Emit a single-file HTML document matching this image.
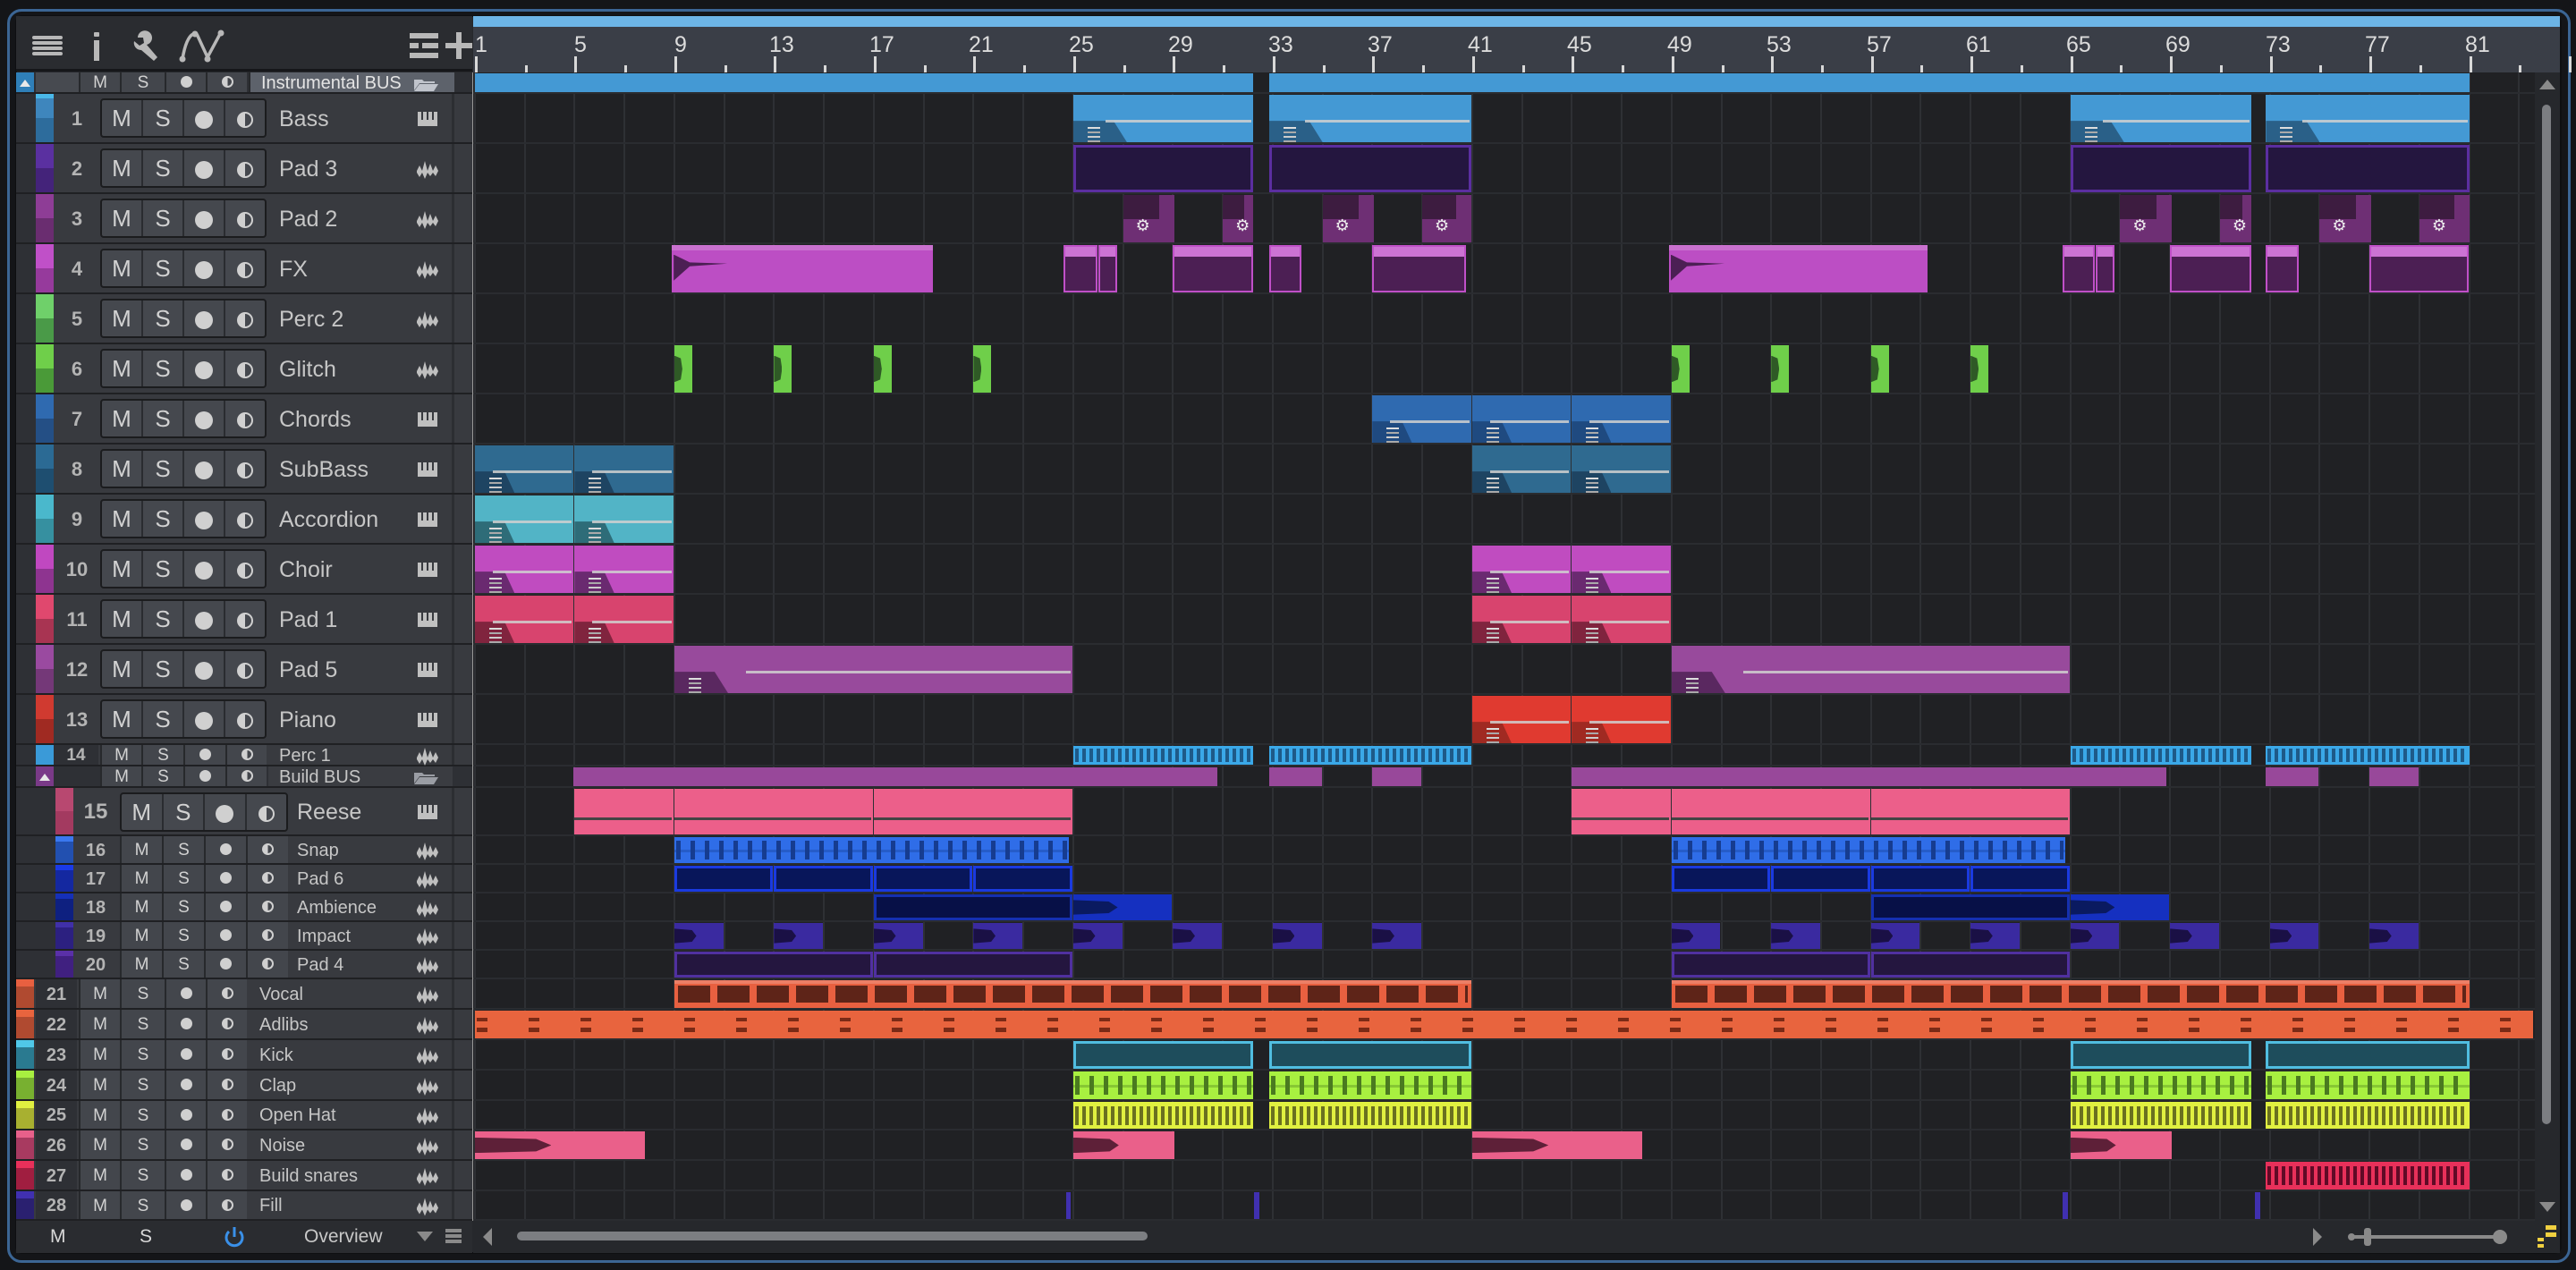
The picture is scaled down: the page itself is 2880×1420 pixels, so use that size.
<!DOCTYPE html>
<html><head><meta charset="utf-8">
<style>
*{box-sizing:border-box;margin:0;padding:0}
body{width:2880px;height:1420px;background:#141518;position:relative;overflow:hidden;font-family:"Liberation Sans",sans-serif;color:#c8c8c8}
.frame{position:absolute;left:8px;top:10px;width:2866px;height:1402px;border:3px solid #3b6594;border-radius:16px}
.win{position:absolute;left:17px;top:17px;width:2847px;height:1385px;background:#26282c;border:2px solid #0e0f11;border-radius:8px;overflow:hidden}
.r{position:absolute;left:18px;width:510px;background:#383a3f;border-bottom:2px solid #1f2023}
.r>div{position:absolute}
.lf{top:0;bottom:0;left:0;background:#2e3035}
.st{top:0;bottom:0;width:20px}
.n{top:0;bottom:0;text-align:center;font-weight:bold;color:#b4b4b4}
.c{top:0;bottom:0;background:#43464c;border-left:2px solid #27292c;text-align:center;color:#d2d2d2}
.g{background:#45484e;border:2px solid #1b1c1e;border-radius:4px;display:flex;overflow:hidden}
.g span{flex:1;text-align:center;border-left:2px solid #2a2c30;color:#d2d2d2}
.g span:first-child{border-left:none}
.nm{top:0;bottom:0;color:#c6c6c6;white-space:nowrap}
.sep{top:0;bottom:0;left:487px;width:3px;background:#2c2e32}
.dot{display:inline-block;border-radius:50%;background:#d0d0d0;vertical-align:middle}
.hc{display:inline-block;vertical-align:middle;border-radius:50%;border:2px solid #d0d0d0;background:linear-gradient(90deg,#d0d0d0 50%,transparent 50%)}
.b{width:18px;height:18px}
.s{width:13px;height:13px}
</style></head><body>
<div class="frame"></div>
<div class="win"></div>

<!-- toolbar -->
<div style="position:absolute;left:18px;top:18px;width:510px;height:62px;background:#2a2c30;border-bottom:3px solid #16171a"></div>
<svg style="position:absolute;left:18px;top:18px" width="510" height="62">
 <g fill="#b8b8b8">
  <rect x="18" y="22" width="34" height="4" rx="2"/><rect x="18" y="28" width="34" height="4" rx="2"/><rect x="18" y="34" width="34" height="4" rx="2"/><rect x="18" y="40" width="34" height="4" rx="2"/>
  <rect x="87" y="18" width="6" height="5" rx="1"/><rect x="87" y="27" width="6" height="23"/>
  <rect x="440" y="19" width="32" height="6"/><rect x="440" y="30" width="10" height="6"/><rect x="454" y="30" width="18" height="6"/><rect x="440" y="41" width="32" height="6"/>
  <rect x="480" y="30" width="30" height="6"/><rect x="492" y="18" width="6" height="30"/>
 </g>
 <path d="M136 24 a8 8 0 1 1 10 8 l12 14 -4 4 -14 -12 a8 8 0 0 1 -8 -10 l6 5 5 -3 -1 -6z" fill="#b8b8b8"/>
 <path d="M186 48 Q190 24 198 20 M202 20 L214 46 L228 20" stroke="#b8b8b8" stroke-width="3.5" fill="none"/>
 <g fill="#b8b8b8"><circle cx="186" cy="48" r="3.5"/><circle cx="200" cy="20" r="3.5"/><circle cx="214" cy="48" r="3.5"/><circle cx="229" cy="19" r="3.5"/></g>
</svg>

<!-- ruler -->
<div style="position:absolute;left:529px;top:18px;width:2333px;height:63px;background:#3a3e47"></div>
<div style="position:absolute;left:529px;top:18px;width:2333px;height:12px;background:#6cb4e6"></div>
<div id="ruler" style="position:absolute;left:529px;top:30px;width:2333px;height:51px;font-size:25px;color:#dcdcdc">
<span style="position:absolute;left:2px;top:6px">1</span>
<span style="position:absolute;left:113px;top:6px">5</span>
<span style="position:absolute;left:225px;top:6px">9</span>
<span style="position:absolute;left:331px;top:6px">13</span>
<span style="position:absolute;left:443px;top:6px">17</span>
<span style="position:absolute;left:554px;top:6px">21</span>
<span style="position:absolute;left:666px;top:6px">25</span>
<span style="position:absolute;left:777px;top:6px">29</span>
<span style="position:absolute;left:889px;top:6px">33</span>
<span style="position:absolute;left:1000px;top:6px">37</span>
<span style="position:absolute;left:1112px;top:6px">41</span>
<span style="position:absolute;left:1223px;top:6px">45</span>
<span style="position:absolute;left:1335px;top:6px">49</span>
<span style="position:absolute;left:1446px;top:6px">53</span>
<span style="position:absolute;left:1558px;top:6px">57</span>
<span style="position:absolute;left:1669px;top:6px">61</span>
<span style="position:absolute;left:1781px;top:6px">65</span>
<span style="position:absolute;left:1892px;top:6px">69</span>
<span style="position:absolute;left:2004px;top:6px">73</span>
<span style="position:absolute;left:2115px;top:6px">77</span>
<span style="position:absolute;left:2227px;top:6px">81</span>
</div>

<!-- track panel -->
<div style="position:absolute;left:18px;top:81px;width:510px;height:1284px;background:#2e3035"></div>
<div style="position:absolute;left:527px;top:81px;width:2px;height:1284px;background:#9a9a9a"></div>

<!-- Instrumental BUS -->
<div class="r" style="top:81px;height:24px;background:#2e3035">
 <div class="st" style="left:0;background:#2f7fb8"><svg width="20" height="24"><path d="M4 16 L10 8 L16 16Z" fill="#e8e8e8"/></svg></div>
 <div style="left:22px;top:0;bottom:0;width:66px;background:#474a50"></div>
 <div class="c" style="left:70px;width:46px;font-size:19px;line-height:24px">M</div>
 <div class="c" style="left:116px;width:50px;font-size:19px;line-height:24px">S</div>
 <div class="c" style="left:166px;width:46px;line-height:22px"><i class="dot s"></i></div>
 <div class="c" style="left:212px;width:46px;line-height:22px"><i class="hc s"></i></div>
 <div class="c" style="left:260px;width:230px;background:#5d626b;text-align:left;padding-left:12px;font-size:20px;line-height:24px;color:#e4e4e4">Instrumental BUS</div>
</div>
<svg style="position:absolute;left:462px;top:86px" width="30" height="16"><path d="M1 3 h9 l2 2 h12 v2 H7 L1 15Z M7 8 h21 l-5 8 H1Z" fill="#c0c4cc"/></svg>

<div class="r" style="top:105px;height:56px"><div class="lf" style="width:22px"></div><div class="st" style="left:22px;background:linear-gradient(#4ab8e8 0 5px,#3e86bd 5px 50%,#2d6c9c 50%)"></div><div class="n" style="left:48px;width:40px;font-size:22px;line-height:56px">1</div><div class="g" style="left:94px;top:5px;width:186px;height:44px;font-size:26px;line-height:40px"><span>M</span><span>S</span><span><i class="dot" style="width:20px;height:20px"></i></span><span><i class="hc b"></i></span></div><div class="nm" style="left:294px;font-size:25px;line-height:56px">Bass</div><div class="sep"></div></div>
<div class="r" style="top:161px;height:56px"><div class="lf" style="width:22px"></div><div class="st" style="left:22px;background:linear-gradient(#5a30a0 50%,#44237a 50%)"></div><div class="n" style="left:48px;width:40px;font-size:22px;line-height:56px">2</div><div class="g" style="left:94px;top:5px;width:186px;height:44px;font-size:26px;line-height:40px"><span>M</span><span>S</span><span><i class="dot" style="width:20px;height:20px"></i></span><span><i class="hc b"></i></span></div><div class="nm" style="left:294px;font-size:25px;line-height:56px">Pad 3</div><div class="sep"></div></div>
<div class="r" style="top:217px;height:56px"><div class="lf" style="width:22px"></div><div class="st" style="left:22px;background:linear-gradient(#8e3d96 50%,#6a2d70 50%)"></div><div class="n" style="left:48px;width:40px;font-size:22px;line-height:56px">3</div><div class="g" style="left:94px;top:5px;width:186px;height:44px;font-size:26px;line-height:40px"><span>M</span><span>S</span><span><i class="dot" style="width:20px;height:20px"></i></span><span><i class="hc b"></i></span></div><div class="nm" style="left:294px;font-size:25px;line-height:56px">Pad 2</div><div class="sep"></div></div>
<div class="r" style="top:273px;height:56px"><div class="lf" style="width:22px"></div><div class="st" style="left:22px;background:linear-gradient(#c050c8 50%,#963a9c 50%)"></div><div class="n" style="left:48px;width:40px;font-size:22px;line-height:56px">4</div><div class="g" style="left:94px;top:5px;width:186px;height:44px;font-size:26px;line-height:40px"><span>M</span><span>S</span><span><i class="dot" style="width:20px;height:20px"></i></span><span><i class="hc b"></i></span></div><div class="nm" style="left:294px;font-size:25px;line-height:56px">FX</div><div class="sep"></div></div>
<div class="r" style="top:329px;height:56px"><div class="lf" style="width:22px"></div><div class="st" style="left:22px;background:linear-gradient(#6fd06a 50%,#4a9a48 50%)"></div><div class="n" style="left:48px;width:40px;font-size:22px;line-height:56px">5</div><div class="g" style="left:94px;top:5px;width:186px;height:44px;font-size:26px;line-height:40px"><span>M</span><span>S</span><span><i class="dot" style="width:20px;height:20px"></i></span><span><i class="hc b"></i></span></div><div class="nm" style="left:294px;font-size:25px;line-height:56px">Perc 2</div><div class="sep"></div></div>
<div class="r" style="top:385px;height:56px"><div class="lf" style="width:22px"></div><div class="st" style="left:22px;background:linear-gradient(#6fcf4a 50%,#4a9a38 50%)"></div><div class="n" style="left:48px;width:40px;font-size:22px;line-height:56px">6</div><div class="g" style="left:94px;top:5px;width:186px;height:44px;font-size:26px;line-height:40px"><span>M</span><span>S</span><span><i class="dot" style="width:20px;height:20px"></i></span><span><i class="hc b"></i></span></div><div class="nm" style="left:294px;font-size:25px;line-height:56px">Glitch</div><div class="sep"></div></div>
<div class="r" style="top:441px;height:56px"><div class="lf" style="width:22px"></div><div class="st" style="left:22px;background:linear-gradient(#2f6ab0 50%,#244f85 50%)"></div><div class="n" style="left:48px;width:40px;font-size:22px;line-height:56px">7</div><div class="g" style="left:94px;top:5px;width:186px;height:44px;font-size:26px;line-height:40px"><span>M</span><span>S</span><span><i class="dot" style="width:20px;height:20px"></i></span><span><i class="hc b"></i></span></div><div class="nm" style="left:294px;font-size:25px;line-height:56px">Chords</div><div class="sep"></div></div>
<div class="r" style="top:497px;height:56px"><div class="lf" style="width:22px"></div><div class="st" style="left:22px;background:linear-gradient(#2b6a94 50%,#1e4e70 50%)"></div><div class="n" style="left:48px;width:40px;font-size:22px;line-height:56px">8</div><div class="g" style="left:94px;top:5px;width:186px;height:44px;font-size:26px;line-height:40px"><span>M</span><span>S</span><span><i class="dot" style="width:20px;height:20px"></i></span><span><i class="hc b"></i></span></div><div class="nm" style="left:294px;font-size:25px;line-height:56px">SubBass</div><div class="sep"></div></div>
<div class="r" style="top:553px;height:56px"><div class="lf" style="width:22px"></div><div class="st" style="left:22px;background:linear-gradient(#4ab8cc 50%,#3690a0 50%)"></div><div class="n" style="left:48px;width:40px;font-size:22px;line-height:56px">9</div><div class="g" style="left:94px;top:5px;width:186px;height:44px;font-size:26px;line-height:40px"><span>M</span><span>S</span><span><i class="dot" style="width:20px;height:20px"></i></span><span><i class="hc b"></i></span></div><div class="nm" style="left:294px;font-size:25px;line-height:56px">Accordion</div><div class="sep"></div></div>
<div class="r" style="top:609px;height:56px"><div class="lf" style="width:22px"></div><div class="st" style="left:22px;background:linear-gradient(#c048c0 50%,#8e3490 50%)"></div><div class="n" style="left:48px;width:40px;font-size:22px;line-height:56px">10</div><div class="g" style="left:94px;top:5px;width:186px;height:44px;font-size:26px;line-height:40px"><span>M</span><span>S</span><span><i class="dot" style="width:20px;height:20px"></i></span><span><i class="hc b"></i></span></div><div class="nm" style="left:294px;font-size:25px;line-height:56px">Choir</div><div class="sep"></div></div>
<div class="r" style="top:665px;height:56px"><div class="lf" style="width:22px"></div><div class="st" style="left:22px;background:linear-gradient(#e0486e 50%,#a83452 50%)"></div><div class="n" style="left:48px;width:40px;font-size:22px;line-height:56px">11</div><div class="g" style="left:94px;top:5px;width:186px;height:44px;font-size:26px;line-height:40px"><span>M</span><span>S</span><span><i class="dot" style="width:20px;height:20px"></i></span><span><i class="hc b"></i></span></div><div class="nm" style="left:294px;font-size:25px;line-height:56px">Pad 1</div><div class="sep"></div></div>
<div class="r" style="top:721px;height:56px"><div class="lf" style="width:22px"></div><div class="st" style="left:22px;background:linear-gradient(#9a4aa0 50%,#743878 50%)"></div><div class="n" style="left:48px;width:40px;font-size:22px;line-height:56px">12</div><div class="g" style="left:94px;top:5px;width:186px;height:44px;font-size:26px;line-height:40px"><span>M</span><span>S</span><span><i class="dot" style="width:20px;height:20px"></i></span><span><i class="hc b"></i></span></div><div class="nm" style="left:294px;font-size:25px;line-height:56px">Pad 5</div><div class="sep"></div></div>
<div class="r" style="top:777px;height:56px"><div class="lf" style="width:22px"></div><div class="st" style="left:22px;background:linear-gradient(#d03a30 50%,#a02a22 50%)"></div><div class="n" style="left:48px;width:40px;font-size:22px;line-height:56px">13</div><div class="g" style="left:94px;top:5px;width:186px;height:44px;font-size:26px;line-height:40px"><span>M</span><span>S</span><span><i class="dot" style="width:20px;height:20px"></i></span><span><i class="hc b"></i></span></div><div class="nm" style="left:294px;font-size:25px;line-height:56px">Piano</div><div class="sep"></div></div>

<div class="r" style="top:833px;height:24px"><div class="lf" style="width:22px"></div><div class="st" style="left:22px;background:#3a9ad8"></div><div class="n" style="left:42px;width:50px;font-size:19px;line-height:24px;background:#2e3035">14</div><div class="c" style="left:94px;width:46px;font-size:19px;line-height:24px">M</div><div class="c" style="left:140px;width:47px;font-size:19px;line-height:24px">S</div><div class="c" style="left:187px;width:47px;line-height:22px"><i class="dot s"></i></div><div class="c" style="left:234px;width:46px;line-height:22px"><i class="hc s"></i></div><div class="nm" style="left:294px;font-size:20px;line-height:24px">Perc 1</div><div class="sep"></div></div>
<div class="r" style="top:857px;height:24px;background:#2e3035"><div class="st" style="left:22px;background:#7a3a88"><svg width="20" height="24"><path d="M4 16 L10 8 L16 16Z" fill="#e8e8e8"/></svg></div><div class="c" style="left:94px;width:46px;font-size:19px;line-height:24px">M</div><div class="c" style="left:140px;width:47px;font-size:19px;line-height:24px">S</div><div class="c" style="left:187px;width:47px;line-height:22px"><i class="dot s"></i></div><div class="c" style="left:234px;width:46px;line-height:22px"><i class="hc s"></i></div><div class="nm" style="left:282px;width:206px;padding-left:12px;background:#3a3c41;font-size:20px;line-height:24px">Build BUS</div></div>
<svg style="position:absolute;left:462px;top:861px" width="30" height="16"><path d="M1 3 h9 l2 2 h12 v2 H7 L1 15Z M7 8 h21 l-5 8 H1Z" fill="#9a9da4"/></svg>

<div class="r" style="top:881px;height:54px"><div class="lf" style="width:44px"></div><div class="st" style="left:44px;background:linear-gradient(#b84870 50%,#a33a60 50%)"></div><div class="n" style="left:64px;width:50px;font-size:24px;line-height:54px">15</div><div class="g" style="left:116px;top:5px;width:188px;height:44px;font-size:26px;line-height:40px"><span>M</span><span>S</span><span><i class="dot" style="width:20px;height:20px"></i></span><span><i class="hc b"></i></span></div><div class="nm" style="left:314px;font-size:25px;line-height:54px">Reese</div><div class="sep"></div></div>
<div class="r" style="top:935px;height:32px"><div class="lf" style="width:44px"></div><div class="st" style="left:44px;background:linear-gradient(#3a78f0 0 6px,#2250b0 6px)"></div><div class="n" style="left:64px;width:50px;font-size:20px;line-height:32px">16</div><div class="c" style="left:116px;width:47px;font-size:19px;line-height:32px">M</div><div class="c" style="left:163px;width:47px;font-size:19px;line-height:32px">S</div><div class="c" style="left:210px;width:47px;line-height:30px"><i class="dot s"></i></div><div class="c" style="left:257px;width:47px;line-height:30px"><i class="hc s"></i></div><div class="nm" style="left:314px;font-size:20px;line-height:32px">Snap</div><div class="sep"></div></div>
<div class="r" style="top:967px;height:32px"><div class="lf" style="width:44px"></div><div class="st" style="left:44px;background:linear-gradient(#1a3ae8 0 6px,#1428a0 6px)"></div><div class="n" style="left:64px;width:50px;font-size:20px;line-height:32px">17</div><div class="c" style="left:116px;width:47px;font-size:19px;line-height:32px">M</div><div class="c" style="left:163px;width:47px;font-size:19px;line-height:32px">S</div><div class="c" style="left:210px;width:47px;line-height:30px"><i class="dot s"></i></div><div class="c" style="left:257px;width:47px;line-height:30px"><i class="hc s"></i></div><div class="nm" style="left:314px;font-size:20px;line-height:32px">Pad 6</div><div class="sep"></div></div>
<div class="r" style="top:999px;height:32px"><div class="lf" style="width:44px"></div><div class="st" style="left:44px;background:linear-gradient(#1530b8 0 6px,#0e2080 6px)"></div><div class="n" style="left:64px;width:50px;font-size:20px;line-height:32px">18</div><div class="c" style="left:116px;width:47px;font-size:19px;line-height:32px">M</div><div class="c" style="left:163px;width:47px;font-size:19px;line-height:32px">S</div><div class="c" style="left:210px;width:47px;line-height:30px"><i class="dot s"></i></div><div class="c" style="left:257px;width:47px;line-height:30px"><i class="hc s"></i></div><div class="nm" style="left:314px;font-size:20px;line-height:32px">Ambience</div><div class="sep"></div></div>
<div class="r" style="top:1031px;height:32px"><div class="lf" style="width:44px"></div><div class="st" style="left:44px;background:linear-gradient(#4030a8 0 6px,#2c2080 6px)"></div><div class="n" style="left:64px;width:50px;font-size:20px;line-height:32px">19</div><div class="c" style="left:116px;width:47px;font-size:19px;line-height:32px">M</div><div class="c" style="left:163px;width:47px;font-size:19px;line-height:32px">S</div><div class="c" style="left:210px;width:47px;line-height:30px"><i class="dot s"></i></div><div class="c" style="left:257px;width:47px;line-height:30px"><i class="hc s"></i></div><div class="nm" style="left:314px;font-size:20px;line-height:32px">Impact</div><div class="sep"></div></div>
<div class="r" style="top:1063px;height:32px"><div class="lf" style="width:44px"></div><div class="st" style="left:44px;background:linear-gradient(#5a30a8 0 6px,#402080 6px)"></div><div class="n" style="left:64px;width:50px;font-size:20px;line-height:32px">20</div><div class="c" style="left:116px;width:47px;font-size:19px;line-height:32px">M</div><div class="c" style="left:163px;width:47px;font-size:19px;line-height:32px">S</div><div class="c" style="left:210px;width:47px;line-height:30px"><i class="dot s"></i></div><div class="c" style="left:257px;width:47px;line-height:30px"><i class="hc s"></i></div><div class="nm" style="left:314px;font-size:20px;line-height:32px">Pad 4</div><div class="sep"></div></div>

<div class="r" style="top:1095px;height:34px"><div class="st" style="left:0;background:linear-gradient(#e86040 0 8px,#b04a30 8px)"></div><div class="n" style="left:22px;width:46px;font-size:20px;line-height:34px;background:#2e3035">21</div><div class="c" style="left:70px;width:46px;font-size:19px;line-height:34px">M</div><div class="c" style="left:116px;width:50px;font-size:19px;line-height:34px">S</div><div class="c" style="left:166px;width:46px;line-height:32px"><i class="dot s"></i></div><div class="c" style="left:212px;width:46px;line-height:32px"><i class="hc s"></i></div><div class="nm" style="left:272px;font-size:20px;line-height:34px">Vocal</div><div class="sep"></div></div>
<div class="r" style="top:1129px;height:34px"><div class="st" style="left:0;background:linear-gradient(#e8643e 0 8px,#b04a30 8px)"></div><div class="n" style="left:22px;width:46px;font-size:20px;line-height:34px;background:#2e3035">22</div><div class="c" style="left:70px;width:46px;font-size:19px;line-height:34px">M</div><div class="c" style="left:116px;width:50px;font-size:19px;line-height:34px">S</div><div class="c" style="left:166px;width:46px;line-height:32px"><i class="dot s"></i></div><div class="c" style="left:212px;width:46px;line-height:32px"><i class="hc s"></i></div><div class="nm" style="left:272px;font-size:20px;line-height:34px">Adlibs</div><div class="sep"></div></div>
<div class="r" style="top:1163px;height:34px"><div class="st" style="left:0;background:linear-gradient(#50c8e8 0 8px,#2a7a90 8px)"></div><div class="n" style="left:22px;width:46px;font-size:20px;line-height:34px;background:#2e3035">23</div><div class="c" style="left:70px;width:46px;font-size:19px;line-height:34px">M</div><div class="c" style="left:116px;width:50px;font-size:19px;line-height:34px">S</div><div class="c" style="left:166px;width:46px;line-height:32px"><i class="dot s"></i></div><div class="c" style="left:212px;width:46px;line-height:32px"><i class="hc s"></i></div><div class="nm" style="left:272px;font-size:20px;line-height:34px">Kick</div><div class="sep"></div></div>
<div class="r" style="top:1197px;height:34px"><div class="st" style="left:0;background:linear-gradient(#a8f040 0 8px,#78b030 8px)"></div><div class="n" style="left:22px;width:46px;font-size:20px;line-height:34px;background:#2e3035">24</div><div class="c" style="left:70px;width:46px;font-size:19px;line-height:34px">M</div><div class="c" style="left:116px;width:50px;font-size:19px;line-height:34px">S</div><div class="c" style="left:166px;width:46px;line-height:32px"><i class="dot s"></i></div><div class="c" style="left:212px;width:46px;line-height:32px"><i class="hc s"></i></div><div class="nm" style="left:272px;font-size:20px;line-height:34px">Clap</div><div class="sep"></div></div>
<div class="r" style="top:1231px;height:33px"><div class="st" style="left:0;background:linear-gradient(#e0f040 0 8px,#a8b030 8px)"></div><div class="n" style="left:22px;width:46px;font-size:20px;line-height:33px;background:#2e3035">25</div><div class="c" style="left:70px;width:46px;font-size:19px;line-height:33px">M</div><div class="c" style="left:116px;width:50px;font-size:19px;line-height:33px">S</div><div class="c" style="left:166px;width:46px;line-height:31px"><i class="dot s"></i></div><div class="c" style="left:212px;width:46px;line-height:31px"><i class="hc s"></i></div><div class="nm" style="left:272px;font-size:20px;line-height:33px">Open Hat</div><div class="sep"></div></div>
<div class="r" style="top:1264px;height:34px"><div class="st" style="left:0;background:linear-gradient(#e8608a 0 8px,#a83a60 8px)"></div><div class="n" style="left:22px;width:46px;font-size:20px;line-height:34px;background:#2e3035">26</div><div class="c" style="left:70px;width:46px;font-size:19px;line-height:34px">M</div><div class="c" style="left:116px;width:50px;font-size:19px;line-height:34px">S</div><div class="c" style="left:166px;width:46px;line-height:32px"><i class="dot s"></i></div><div class="c" style="left:212px;width:46px;line-height:32px"><i class="hc s"></i></div><div class="nm" style="left:272px;font-size:20px;line-height:34px">Noise</div><div class="sep"></div></div>
<div class="r" style="top:1298px;height:34px"><div class="st" style="left:0;background:linear-gradient(#e8305a 0 8px,#a01e40 8px)"></div><div class="n" style="left:22px;width:46px;font-size:20px;line-height:34px;background:#2e3035">27</div><div class="c" style="left:70px;width:46px;font-size:19px;line-height:34px">M</div><div class="c" style="left:116px;width:50px;font-size:19px;line-height:34px">S</div><div class="c" style="left:166px;width:46px;line-height:32px"><i class="dot s"></i></div><div class="c" style="left:212px;width:46px;line-height:32px"><i class="hc s"></i></div><div class="nm" style="left:272px;font-size:20px;line-height:34px">Build snares</div><div class="sep"></div></div>
<div class="r" style="top:1332px;height:33px"><div class="st" style="left:0;background:linear-gradient(#4030b0 0 8px,#2a2070 8px)"></div><div class="n" style="left:22px;width:46px;font-size:20px;line-height:33px;background:#2e3035">28</div><div class="c" style="left:70px;width:46px;font-size:19px;line-height:33px">M</div><div class="c" style="left:116px;width:50px;font-size:19px;line-height:33px">S</div><div class="c" style="left:166px;width:46px;line-height:31px"><i class="dot s"></i></div><div class="c" style="left:212px;width:46px;line-height:31px"><i class="hc s"></i></div><div class="nm" style="left:272px;font-size:20px;line-height:33px">Fill</div><div class="sep"></div></div>

<svg id="icons" style="position:absolute;left:0;top:0;pointer-events:none" width="528" height="1365"></svg>

<!-- footer -->
<div style="position:absolute;left:18px;top:1365px;width:510px;height:36px;background:#2a2c30;font-size:21px;line-height:36px;color:#d8d8d8">
 <span style="position:absolute;left:38px">M</span>
 <span style="position:absolute;left:138px">S</span>
 <svg style="position:absolute;left:232px;top:6px" width="24" height="24"><path d="M6 6 A9 9 0 1 0 18 6" stroke="#3a90e8" stroke-width="3" fill="none"/><rect x="10.5" y="1" width="3" height="11" fill="#3a90e8"/></svg>
 <span style="position:absolute;left:322px;color:#c8c8c8">Overview</span>
 <svg style="position:absolute;left:448px;top:12px" width="18" height="12"><path d="M0 0H18L9 11Z" fill="#8a8a8a"/></svg>
 <svg style="position:absolute;left:480px;top:9px" width="18" height="18"><rect y="0" width="18" height="4" fill="#8a8a8a"/><rect y="6" width="18" height="4" fill="#8a8a8a"/><rect y="12" width="18" height="4" fill="#8a8a8a"/></svg>
</div>

<div id="arr" style="position:absolute;left:529px;top:81px;width:2305px;height:1284px;background:#202124;overflow:hidden"></div>

<div style="position:absolute;left:2834px;top:81px;width:28px;height:1284px;background:#26282c"></div>
<svg style="position:absolute;left:2836px;top:86px" width="24" height="16"><path d="M3 14L12 3L21 14Z" fill="#8a8a8a"/></svg>
<div style="position:absolute;left:2842px;top:117px;width:10px;height:1140px;border-radius:5px;background:#7c7e82"></div>
<svg style="position:absolute;left:2836px;top:1342px" width="24" height="16"><path d="M3 2L12 13L21 2Z" fill="#8a8a8a"/></svg>
<div style="position:absolute;left:529px;top:1365px;width:2333px;height:36px;background:#26282c"></div>
<svg style="position:absolute;left:538px;top:1372px" width="14" height="22"><path d="M12 1L2 11L12 21Z" fill="#8a8a8a"/></svg>
<div style="position:absolute;left:578px;top:1377px;width:705px;height:10px;border-radius:5px;background:#7c7e82"></div>
<svg style="position:absolute;left:2584px;top:1372px" width="14" height="22"><path d="M2 1L12 11L2 21Z" fill="#8a8a8a"/></svg>
<svg style="position:absolute;left:2620px;top:1368px" width="190" height="30"><rect x="8" y="13" width="170" height="4" fill="#8a8a8a"/><circle cx="9" cy="15" r="4" fill="#8a8a8a"/><rect x="23" y="5" width="8" height="20" rx="3" fill="#8a8a8a"/><circle cx="175" cy="15" r="8" fill="#8a8a8a"/></svg>
<svg style="position:absolute;left:2836px;top:1368px" width="26" height="30"><rect x="10" y="2" width="12" height="5" fill="#f0d040"/><rect x="10" y="10" width="12" height="5" fill="#f0d040"/><rect x="1" y="16" width="7" height="4" fill="#f0d040"/><rect x="1" y="23" width="7" height="4" fill="#f0d040"/></svg>

<script>
(function(){
var arr=document.getElementById('arr');
function X(b){return 1+(b-1)*27.87;}
var h='';
for(var b=1;b<=85;b+=2){h+='<div style="position:absolute;left:'+X(b)+'px;top:0;width:2px;height:1284px;background:#2e3034"></div>';}
var R={bus:[0,24]};
for(var i=1;i<=13;i++)R['t'+i]=[24+56*(i-1),56];
R.t14=[752,24];R.bb=[776,24];R.t15=[800,54];
for(i=16;i<=20;i++)R['t'+i]=[854+32*(i-16),32];
var tops=[1014,1048,1082,1116,1150,1183,1217,1251,1284];
for(i=21;i<=28;i++)R['t'+i]=[tops[i-21],tops[i-20]-tops[i-21]];
for(var k in R){h+='<div style="position:absolute;left:0;top:'+(R[k][0]+R[k][1]-2)+'px;width:2305px;height:2px;background:#2a2c30"></div>';}
function C(r,b1,b2,col,type,dk){
 var t=R[r][0]+1,hh=R[r][1]-3,x=X(b1)+1,w=X(b2)-X(b1)-1;
 var s='position:absolute;left:'+x+'px;top:'+t+'px;width:'+w+'px;height:'+hh+'px;overflow:hidden;';
 var inner='';
 if(type=='box'){s+='background:'+dk+';border:3px solid '+col+';';}
 else if(type=='tab'){s+='background:'+col+';';
   inner='<div style="position:absolute;left:0;bottom:0;width:'+Math.min(60,w*0.4)+'px;height:45%;background:'+dk+';clip-path:polygon(0 0,75% 0,100% 100%,0 100%)"></div><div style="position:absolute;left:16px;bottom:10%;width:14px;height:2px;background:#ccc;box-shadow:0 -5px #aaa,0 -10px #ddd,0 5px #aaa"></div><div style="position:absolute;left:18%;right:2px;top:52%;height:3px;background:#d0d0d0;opacity:.85"></div>';}
 else if(type=='line'){s+='background:'+col+';';
   inner='<div style="position:absolute;left:0;right:2px;top:62%;height:3px;background:#444"></div>';}
 else if(type=='wave'){s+='background:'+col+';';
   inner='<div style="position:absolute;left:2px;right:2px;top:15%;height:70%;background:repeating-linear-gradient(90deg,'+dk+' 0 5px,transparent 5px 16px)"></div><div style="position:absolute;left:0;right:0;top:49%;height:3px;background:'+dk+';opacity:.35"></div>';}
 else if(type=='sparse'){s+='background:'+col+';';
   inner='<div style="position:absolute;left:2px;right:2px;top:25%;height:15%;background:repeating-linear-gradient(90deg,'+dk+' 0 12px,transparent 12px 58px)"></div><div style="position:absolute;left:2px;right:2px;top:62%;height:15%;background:repeating-linear-gradient(90deg,'+dk+' 0 12px,transparent 12px 58px)"></div>';}
 else if(type=='dense'){s+='background:'+col+';';
   inner='<div style="position:absolute;left:2px;right:2px;top:15%;height:70%;background:repeating-linear-gradient(90deg,'+dk+' 0 4px,transparent 4px 8px)"></div>';}
 else if(type=='blob'){s+='background:'+col+';';
   inner='<div style="position:absolute;left:4px;right:4px;top:18%;height:64%;background:repeating-linear-gradient(90deg,'+dk+' 0 36px,transparent 36px 44px)"></div><div style="position:absolute;left:0;right:0;top:0;height:12%;background:rgba(255,255,255,.2)"></div>';}
 else if(type=='fx'){s+='background:'+col+';border:2px solid '+col+';';
   inner='<div style="position:absolute;left:0;right:0;top:22%;bottom:0;background:'+dk+'"></div><div style="position:absolute;left:0;right:0;top:0;height:22%;background:rgba(255,255,255,.2)"></div>';}
 else if(type=='fxb'){s+='background:'+col+';';
   inner='<div style="position:absolute;left:0;right:0;top:0;height:12%;background:rgba(255,255,255,.2)"></div><div style="position:absolute;left:2px;top:20%;width:60px;height:55%;background:'+dk+';clip-path:polygon(0 0,30% 30%,100% 35%,30% 45%,0 100%)"></div>';}
 else if(type=='gear'){s+='background:'+col+';';
   inner='<div style="position:absolute;left:0;top:0;right:30%;height:50%;background:'+dk+'"></div><div style="position:absolute;left:14px;bottom:8px;color:#eee;font-size:18px">&#9881;</div>';}
 else if(type=='fade'){s+='background:'+col+';';
   inner='<div style="position:absolute;left:0;top:22%;width:45%;height:56%;background:'+dk+';clip-path:polygon(0 0,80% 10%,100% 50%,80% 90%,0 100%)"></div>';}
 else {s+='background:'+col+';';}
 h+='<div style="'+s+'">'+inner+'</div>';
}
var A=[[25,32.25],[32.85,41],[65,72.3],[72.85,81.05]];
C('bus',1,32.25,'#4499d4');C('bus',32.85,81.05,'#4499d4');
A.forEach(function(a){C('t1',a[0],a[1],'#4499d4','tab','#2a6088');C('t2',a[0],a[1],'#5b2ea0','box','#24163f');C('t14',a[0],a[1],'#3aa8e8','dense','#1e5a88');C('t23',a[0],a[1],'#50bde0','box','#1e4d5c');C('t24',a[0],a[1],'#a8f040','wave','#4a7a20');C('t25',a[0],a[1],'#e0f040','dense','#6a7020');});
[[27,29.1],[31,32.25],[35,37.1],[39,41],[67,69.1],[71,72.3],[75,77.1],[79,81.05]].forEach(function(a){C('t3',a[0],a[1],'#6e2f74','gear','#3d1c40');});
[[8.9,19.4],[48.9,59.3]].forEach(function(a){C('t4',a[0],a[1],'#bc4ec4','fxb','#4c1f54');});
[[24.6,26],[26,26.8],[29,32.25],[32.85,34.2],[37,40.8],[64.7,66],[66,66.8],[69,72.3],[72.85,74.2],[77,81]].forEach(function(a){C('t4',a[0],a[1],'#c050c8','fx','#4c1f54');});
[9,13,17,21,49,53,57,61].forEach(function(b){C('t6',b,b+0.75,'#6fcf4a','fade','#2f5a26');});
[[37,41],[41,45],[45,49]].forEach(function(a){C('t7',a[0],a[1],'#2f6ab0','tab','#1f4a80');});
[[1,5],[5,9],[41,45],[45,49]].forEach(function(a){C('t8',a[0],a[1],'#2f6a90','tab','#1e4462');C('t10',a[0],a[1],'#c04cc0','tab','#6a2a70');C('t11',a[0],a[1],'#d8446e','tab','#80243e');});
[[1,5],[5,9]].forEach(function(a){C('t9',a[0],a[1],'#52b4c6','tab','#2e6c78');});
[[9,25],[49,65]].forEach(function(a){C('t12',a[0],a[1],'#984a9c','tab','#5a2860');});
[[41,45],[45,49]].forEach(function(a){C('t13',a[0],a[1],'#e03a30','tab','#a02a22');});
[[4.95,30.8],[32.85,35],[37,39],[45,68.9],[72.85,75],[77,79]].forEach(function(a){C('bb',a[0],a[1],'#98489a');});
[[5,9],[9,17],[17,25],[45,49],[49,57],[57,65]].forEach(function(a){C('t15',a[0],a[1],'#ec5f8a','line');});
[[9,24.85],[49,64.85]].forEach(function(a){C('t16',a[0],a[1],'#2f6de8','wave','#163c90');});
[9,13,17,21,49,53,57,61].forEach(function(b){C('t17',b,b+4,'#1a3ae0','box','#08165a');});
[[17,25],[57,65]].forEach(function(a){C('t18',a[0],a[1],'#1530b0','box','#071047');});
[[25,29],[65,69]].forEach(function(a){C('t18',a[0],a[1],'#1530c0','fade','#0a1a60');});
[9,13,17,21,25,29,33,37,49,53,57,61,65,69,73,77].forEach(function(b){C('t19',b,b+2,'#3a2aa0','fade','#1a1045');});
[[9,17],[17,25],[49,57],[57,65]].forEach(function(a){C('t20',a[0],a[1],'#5030a0','box','#24163f');});
[[9,41],[49,81.05]].forEach(function(a){C('t21',a[0],a[1],'#e86040','blob','#5e2418');});
C('t22',1,83.6,'#e8643e','sparse','#7a2a16');
[[1,7.85],[25,29.1],[41,47.85],[65,69.1]].forEach(function(a){C('t26',a[0],a[1],'#ea608a','fade','#5e2038');});
C('t27',72.85,81.05,'#e8305a','dense','#600a26');
[[24.7,24.95],[32.25,32.5],[64.7,64.95],[72.4,72.65]].forEach(function(a){C('t28',a[0],a[1],'#4030b0');});
arr.innerHTML=h;
var rt='';
for(b=1;b<=85;b+=2){var big=((b-1)%4==0);rt+='<div style="position:absolute;left:'+(X(b)+1)+'px;top:'+(big?33:43)+'px;width:3px;height:'+(big?18:8)+'px;background:#d8d8d8"></div>';}
document.getElementById('ruler').insertAdjacentHTML('beforeend',rt);
var ic='';
var piano=[1,7,8,9,10,11,12,13],rows=[];
for(i=1;i<=13;i++)rows.push([i,105+56*(i-1)+28]);
rows.push([14,845]);rows.push([15,908]);
for(i=16;i<=20;i++)rows.push([i,935+32*(i-16)+16]);
var t2=[1095,1129,1163,1197,1231,1264,1298,1332,1365];
for(i=21;i<=28;i++)rows.push([i,(t2[i-21]+t2[i-20])/2]);
rows.forEach(function(r){var cx=478,cy=r[1];
 if(piano.indexOf(r[0])>=0||r[0]==15){ic+='<g fill="#c0c0c0"><rect x="'+(cx-11)+'" y="'+(cy-8)+'" width="22" height="16"/></g><g fill="#383a3f"><rect x="'+(cx-7)+'" y="'+(cy-8)+'" width="2" height="9"/><rect x="'+(cx-1)+'" y="'+(cy-8)+'" width="2" height="9"/><rect x="'+(cx+5)+'" y="'+(cy-8)+'" width="2" height="9"/></g>';}
 else{ic+='<path d="M'+(cx-12)+' '+(cy+2)+' l3 -6 l3 6 l3 -11 l3 11 l3 -8 l3 8 l3 -6 l3 6 l-3 6 l-3 -4 l-3 4 l-3 -4 l-3 7 l-3 -7 l-3 5 l-3 -5z" fill="#c0c0c0"/>';}
});
document.getElementById('icons').innerHTML=ic;
})();
</script>
</body></html>
